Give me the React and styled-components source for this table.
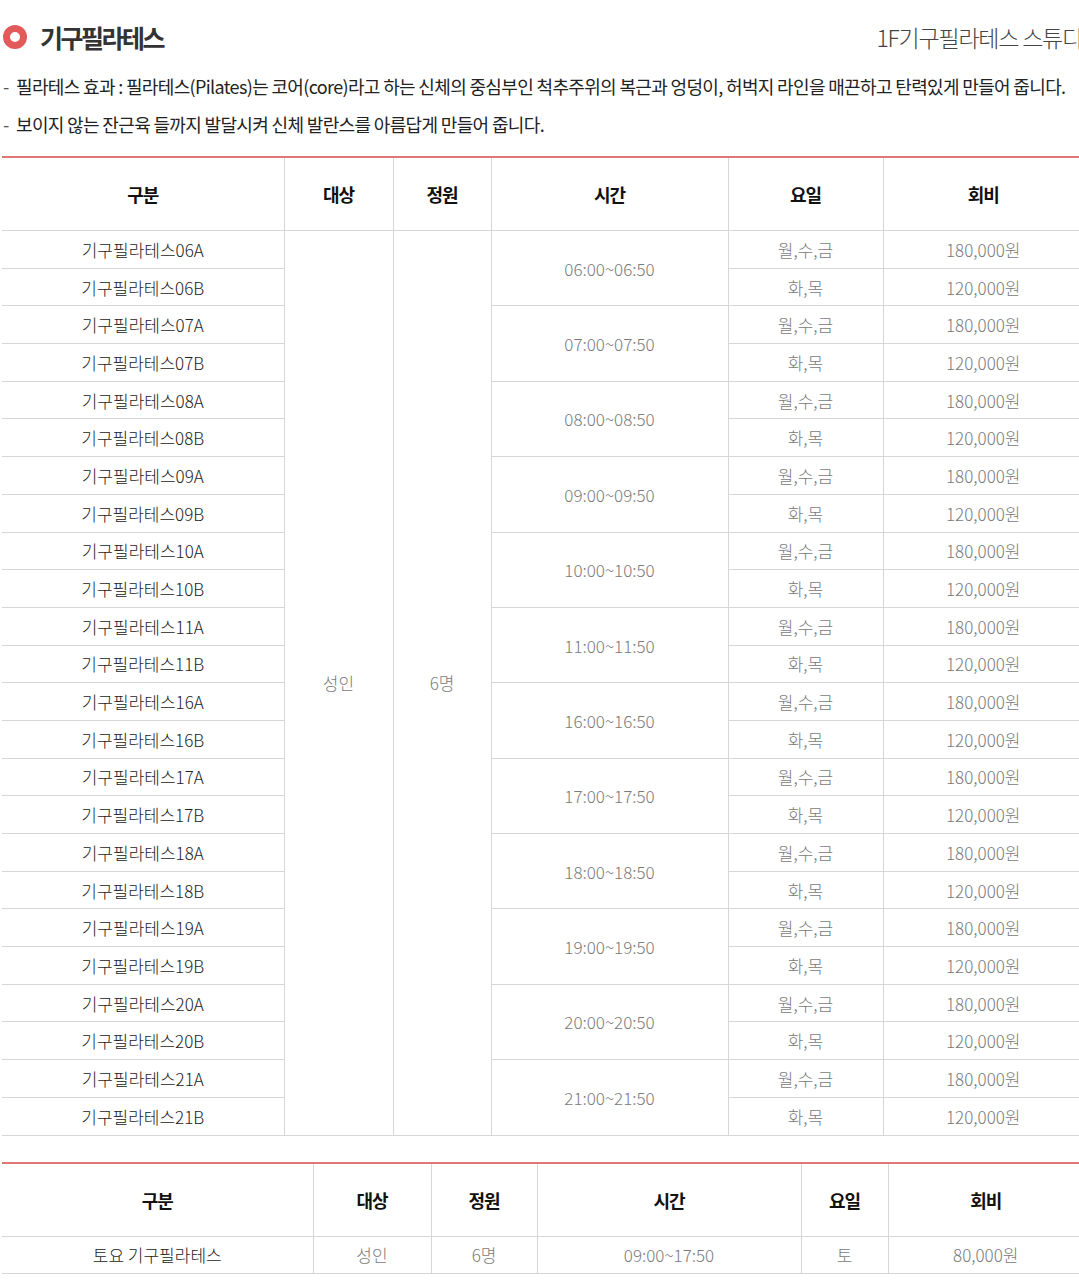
import * as React from 'react';
import styled, { createGlobalStyle } from 'styled-components';

const slots = ['06', '07', '08', '09', '10', '11', '16', '17', '18', '19', '20', '21'];

const App = () => {
  return <Page>
    <GlobalStyle />
    <Header>
      <TitleWrap>
        <Ring />
        <Title>기구필라테스</Title>
      </TitleWrap>
      <Place>1F기구필라테스 스튜디오</Place>
    </Header>
    <Desc>
      <DescLine>필라테스 효과 : 필라테스(Pilates)는 코어(core)라고 하는 신체의 중심부인 척추주위의 복근과 엉덩이, 허벅지 라인을 매끈하고 탄력있게 만들어 줍니다.</DescLine>
      <DescLine>보이지 않는 잔근육 들까지 발달시켜 신체 발란스를 아름답게 만들어 줍니다.</DescLine>
    </Desc>

    <Table>
      <colgroup>
        <col style={{ width: 282 }} />
        <col style={{ width: 109 }} />
        <col style={{ width: 98 }} />
        <col style={{ width: 237 }} />
        <col style={{ width: 155 }} />
        <col />
      </colgroup>
      <thead>
        <tr>
          <Th>구분</Th>
          <Th>대상</Th>
          <Th>정원</Th>
          <Th>시간</Th>
          <Th>요일</Th>
          <Th>회비</Th>
        </tr>
      </thead>
      <tbody>
        {slots.map((h, i) => (
          <React.Fragment key={h}>
            <Row>
              <Td $dark>기구필라테스{h}A</Td>
              {i === 0 && <Td rowSpan={slots.length * 2}>성인</Td>}
              {i === 0 && <Td rowSpan={slots.length * 2}>6명</Td>}
              <Td rowSpan={2}>{h}:00~{h}:50</Td>
              <Td>월,수,금</Td>
              <Td>180,000원</Td>
            </Row>
            <Row>
              <Td $dark>기구필라테스{h}B</Td>
              <Td>화,목</Td>
              <Td>120,000원</Td>
            </Row>
          </React.Fragment>
        ))}
      </tbody>
    </Table>

    <Table $second>
      <colgroup>
        <col style={{ width: 311 }} />
        <col style={{ width: 118 }} />
        <col style={{ width: 106 }} />
        <col style={{ width: 264 }} />
        <col style={{ width: 87 }} />
        <col />
      </colgroup>
      <thead>
        <tr>
          <Th>구분</Th>
          <Th>대상</Th>
          <Th>정원</Th>
          <Th>시간</Th>
          <Th>요일</Th>
          <Th>회비</Th>
        </tr>
      </thead>
      <tbody>
        <Row>
          <Td $dark>토요 기구필라테스</Td>
          <Td>성인</Td>
          <Td>6명</Td>
          <Td>09:00~17:50</Td>
          <Td>토</Td>
          <Td>80,000원</Td>
        </Row>
      </tbody>
    </Table>
  </Page>;
};

export default App;

const GlobalStyle = createGlobalStyle`
  html, body {
    margin: 0;
    padding: 0;
    background: #fff;
    overflow-x: hidden;
  }
  body {
    font-family: "Noto Sans CJK KR", "Noto Sans", sans-serif;
    color: #333;
  }
`;

const Page = styled.div`
  width: 1081px;
  padding: 0 0 20px 2px;
`;

const Header = styled.div`
  display: flex;
  justify-content: space-between;
  align-items: center;
  height: 74px;
  width: 1100px;
`;

const TitleWrap = styled.div`
  display: flex;
  align-items: center;
  gap: 13px;
`;

const Ring = styled.span`
  display: block;
  width: 24px;
  height: 24px;
  box-sizing: border-box;
  border: 7px solid #e35a5b;
  border-radius: 50%;
  margin-left: 1px;
`;

const Title = styled.h1`
  margin: 0;
  font-size: 25px;
  font-weight: 700;
  letter-spacing: -2.5px;
  color: #333;
`;

const Place = styled.div`
  font-size: 23px;
  font-weight: 300;
  letter-spacing: -1.2px;
  color: #444;
`;

const Desc = styled.ul`
  list-style: none;
  margin: 0;
  padding: 0 0 6px 0;
`;

const DescLine = styled.li`
  position: relative;
  padding-left: 14px;
  height: 38px;
  line-height: 24px;
  font-size: 18px;
  letter-spacing: -0.65px;
  white-space: nowrap;
  color: #222;

  &::before {
    content: '-';
    position: absolute;
    left: 1px;
    top: 0;
    color: #555;
  }
`;

const Table = styled.table`
  width: 1081px;
  table-layout: fixed;
  border-collapse: collapse;
  border-top: 2px solid #e27677;
  margin-top: ${p => (p.$second ? '26px' : '0')};
`;

const Th = styled.th`
  height: 72px;
  padding: 0;
  border: 1px solid #d6d6d6;
  border-top: none;
  font-size: 18px;
  font-weight: 700;
  letter-spacing: -1px;
  color: #111;
  text-align: center;

  &:first-child { border-left: none; }
  &:last-child { border-right: none; }
`;

const Row = styled.tr`
  height: 37.7px;
`;

const Td = styled.td`
  padding: 0;
  border: 1px solid #d6d6d6;
  font-size: 17px;
  font-weight: 300;
  letter-spacing: 0;
  text-align: center;
  color: ${p => (p.$dark ? '#222' : '#7a7a7a')};

  &:first-child { border-left: none; }
  &:last-child { border-right: none; }
`;
